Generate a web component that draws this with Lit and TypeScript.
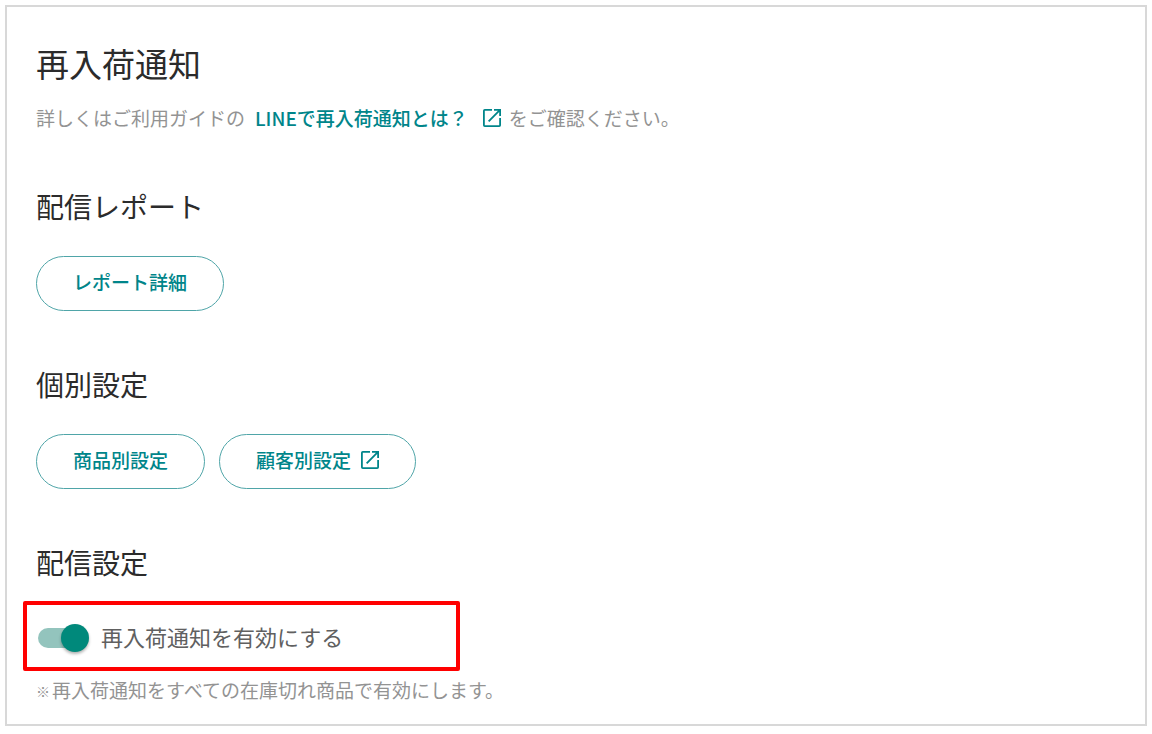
import { LitElement, html, css } from "lit";
import { customElement, state } from "lit/decorators.js";

const externalIcon = html`<svg class="icon" viewBox="0 0 18 18" aria-hidden="true">
  <path
    fill="currentColor"
    d="M16.2 16.2H1.8V1.8H9V0H1.8A1.8 1.8 0 0 0 0 1.8v14.4A1.8 1.8 0 0 0 1.8 18h14.4a1.8 1.8 0 0 0 1.8-1.8V9h-1.8v7.2zM11 0v1.8h3.9L5 11.7 6.3 13l9.9-9.9V7H18V0h-7z"
  />
</svg>`;

@customElement("app-root")
export class AppRoot extends LitElement {
  @state() private enabled = true;

  static styles = css`
    :host {
      display: block;
      padding: 5px 5px 8px;
      background: #fff;
      color: #2b2b2b;
      font-family: "Noto Sans CJK JP", "Noto Sans", sans-serif;
      font-size: 19px;
      line-height: 28px;
    }
    * {
      box-sizing: border-box;
    }
    .panel {
      border: 2px solid #d8d8d8;
      padding: 32px 29px 18px;
    }
    h1,
    h2,
    p {
      margin: 0;
      font-weight: 400;
    }
    h1 {
      font-size: 33px;
      line-height: 48px;
    }
    h2 {
      font-size: 28px;
      line-height: 40px;
    }
    .lead,
    .note {
      color: #939393;
    }
    .lead {
      display: flex;
      flex-wrap: wrap;
      align-items: center;
      gap: 8px;
      margin-top: 16px;
      line-height: 30px;
    }
    a {
      display: inline-flex;
      align-items: center;
      gap: 15px;
      padding-left: 2px;
      color: #00858a;
      font-weight: 500;
      text-decoration: none;
    }
    .icon {
      width: 18px;
      height: 18px;
      flex: none;
    }
    section {
      margin-top: 53px;
    }
    .actions {
      display: flex;
      flex-wrap: wrap;
      gap: 14px;
      margin-top: 30px;
    }
    button {
      display: inline-flex;
      align-items: center;
      gap: 10px;
      height: 55px;
      padding: 0 36px 3px;
      border: 1px solid #4fa5a8;
      border-radius: 28px;
      background: #fff;
      color: #00858a;
      font: inherit;
      font-weight: 500;
      cursor: pointer;
    }
    .highlight {
      width: 437px;
      max-width: 100%;
      margin: 19px 0 0 -13px;
      padding: 15px 9px 11px;
      border: 4px solid #f00;
      border-radius: 2px;
    }
    .toggle {
      display: flex;
      align-items: center;
      gap: 12px;
      color: #606060;
      font-size: 22px;
      line-height: 32px;
      cursor: pointer;
    }
    .label {
      padding-bottom: 4px;
    }
    .switch {
      appearance: none;
      display: flex;
      align-items: center;
      width: 53px;
      height: 28px;
      margin: 0;
      padding-left: 2px;
      flex: none;
      position: relative;
      cursor: pointer;
    }
    .switch::before {
      content: "";
      width: 48px;
      height: 20px;
      border-radius: 10px;
      background: #bdbdbd;
    }
    .switch::after {
      content: "";
      position: absolute;
      left: 0;
      width: 28px;
      height: 28px;
      border-radius: 50%;
      background: #fafafa;
      box-shadow: 0 2px 3px rgba(0, 0, 0, 0.3);
    }
    .switch:checked::before {
      background: #93c4bd;
    }
    .switch:checked::after {
      left: auto;
      right: 0;
      background: #00897b;
    }
    .note {
      display: flex;
      gap: 2px;
      margin-top: 5px;
    }
    .mark {
      font-size: 14px;
      line-height: 30px;
    }
  `;

  private onToggle(e: Event) {
    this.enabled = (e.target as HTMLInputElement).checked;
  }

  render() {
    return html`
      <main class="panel">
        <h1>再入荷通知</h1>
        <p class="lead">
          <span>詳しくはご利用ガイドの</span>
          <a href="#guide"><span>LINEで再入荷通知とは？</span>${externalIcon}</a>
          <span>をご確認ください。</span>
        </p>

        <section>
          <h2>配信レポート</h2>
          <div class="actions">
            <button type="button">レポート詳細</button>
          </div>
        </section>

        <section>
          <h2>個別設定</h2>
          <div class="actions">
            <button type="button">商品別設定</button>
            <button type="button">顧客別設定${externalIcon}</button>
          </div>
        </section>

        <section>
          <h2>配信設定</h2>
          <div class="highlight">
            <label class="toggle">
              <input
                class="switch"
                type="checkbox"
                role="switch"
                .checked=${this.enabled}
                @change=${this.onToggle}
              />
              <span class="label">再入荷通知を有効にする</span>
            </label>
          </div>
          <p class="note">
            <span class="mark">※</span>
            <span>再入荷通知をすべての在庫切れ商品で有効にします。</span>
          </p>
        </section>
      </main>
    `;
  }
}
